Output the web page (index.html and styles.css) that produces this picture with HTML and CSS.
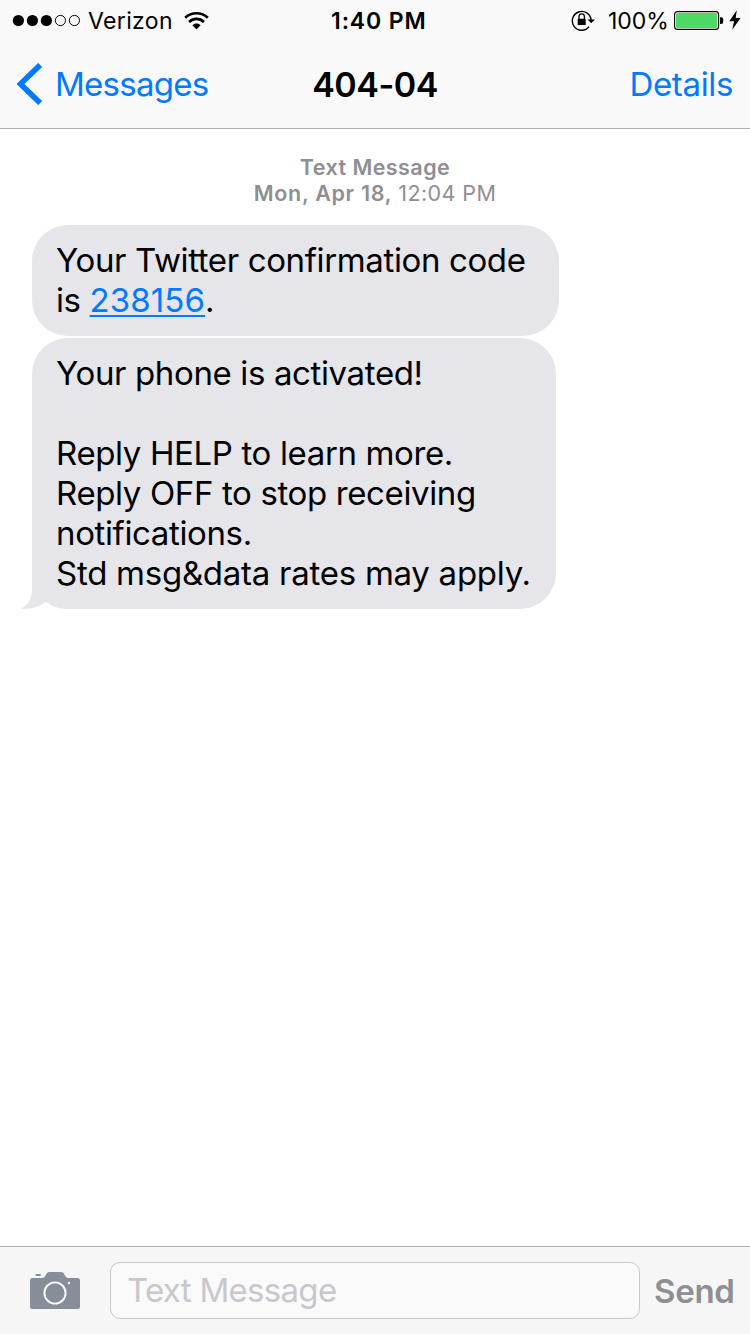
FILE: index.html
```html
<!DOCTYPE html>
<html lang="en">
<head>
<meta charset="utf-8">
<title>404-04</title>
<link rel="stylesheet" href="styles.css">
</head>
<body>
<div class="phone">
  <header class="top">
    <div class="status">
      <div class="status-left">
        <svg class="signal" width="69" height="13" viewBox="0 0 69 13"><g><circle cx="6.4" cy="6.5" r="5.6"/><circle cx="20.4" cy="6.5" r="5.6"/><circle cx="34.4" cy="6.5" r="5.6"/></g><g fill="none" stroke="#000" stroke-width="1"><circle cx="48.4" cy="6.5" r="5.1"/><circle cx="62.4" cy="6.5" r="5.1"/></g></svg>
        <span class="carrier">Verizon</span>
        <svg class="wifi" width="25" height="19" viewBox="0 0 25 19"><g fill="none" stroke="#000" stroke-width="2.7"><path d="M1.2 6.8C7.5.7 17.5.7 23.8 6.8"/><path d="M5 10.9C9.4 6.8 15.6 6.8 20 10.9"/></g><path d="M12.5 18.4L8.4 14.2C10.7 12 14.3 12 16.6 14.2Z"/></svg>
      </div>
      <span class="clock">1:40 PM</span>
      <div class="status-right">
        <svg class="lock" width="25" height="22" viewBox="0 0 25 22"><path d="M18 17.8A9.4 9.4 0 1 1 20.1 11" fill="none" stroke="#000" stroke-width="1.4"/><path d="M16.5 10.4H24L20.2 14.2Z"/><rect x="6.7" y="9.7" width="8" height="6.4" rx=".7"/><path d="M8 10V7.5a2.7 2.7 0 0 1 5.4 0V10" fill="none" stroke="#000" stroke-width="1.3"/></svg>
        <span class="percent">100%</span>
        <svg class="battery" width="50" height="19" viewBox="0 0 50 19"><rect x=".6" y=".6" width="44" height="17.8" rx="3" fill="#fff" stroke="#000" stroke-width="1.1"/><rect x="2" y="2" width="41.2" height="15" rx="1.6" fill="#4cd964"/><path d="M46 6.3h1.2a2 2 0 0 1 2 2v2.6a2 2 0 0 1-2 2H46Z"/></svg>
        <svg class="bolt" width="12" height="20" viewBox="0 0 12 20"><path d="M7.8.2L.3 11.2H5.1L3.2 19.8L11.6 7.9H6.7Z"/></svg>
      </div>
    </div>
    <nav class="nav">
      <a class="back"><svg class="chevron" width="26" height="42" viewBox="0 0 26 42"><path d="M23.2 1.9L3.4 21L23.2 40.1" fill="none" stroke="#007aff" stroke-width="5.6"/></svg><span class="back-label">Messages</span></a>
      <h1 class="title">404-04</h1>
      <a class="details">Details</a>
    </nav>
  </header>
  <main class="thread">
    <div class="stamp"><div class="kind">Text Message</div><div><b class="day">Mon, Apr 18,</b> <span class="hour">12:04 PM</span></div></div>
    <div class="bubble first">Your Twitter confirmation code<br>is <a class="code">238156</a>.</div>
    <div class="bubble second">Your phone is activated!<br><br>Reply HELP to learn more.<br>Reply OFF to stop receiving<br>notifications.<br><span class="rates">Std msg&amp;data rates may apply.</span>
      <svg class="tail" width="48" height="37" viewBox="0 0 48 37"><path d="M12 17H11V18C11 27 7 33.5 0 36.5V37H12Z" fill="#e5e5ea"/><path d="M0 37V36.7C9 37.5 18 35 25 30C31 34.5 38 37 48 37Z" fill="#fff"/></svg>
    </div>
  </main>
  <footer class="compose">
    <svg class="camera" width="50" height="38" viewBox="0 0 50 38"><path d="M2.5 6H12C14 6 14.8 4.8 15.8 3C16.8 1 17.5 0 19.5 0H31C33 0 33.7 1 34.7 3C35.7 4.8 36.5 6 38.5 6H47.5Q50 6 50 8.5V34.5Q50 37 47.5 37H2.5Q0 37 0 34.5V8.5Q0 6 2.5 6Z" fill="#868e99"/><rect x="5.5" y="2" width="5.3" height="2" rx=".7" fill="#868e99"/><circle cx="25" cy="21" r="10.6" fill="none" stroke="#fff" stroke-width="1.9"/><circle cx="39" cy="11" r="1.2" fill="#fff"/></svg>
    <div class="field"><span class="placeholder">Text Message</span></div>
    <span class="send">Send</span>
  </footer>
</div>
</body>
</html>
```
FILE: styles.css
```css
* { box-sizing: border-box; }
body { margin: 0; background: #fff; color: #000; font-family: Inter, "Liberation Sans", sans-serif; font-size: 33px; line-height: 40px; font-feature-settings: "calt" 0; }
svg { display: block; flex: none; }
.phone { width: 750px; height: 1334px; display: flex; flex-direction: column; white-space: nowrap; }
.top { height: 129px; background: #f9f9f9; border-bottom: 1px solid #b2b2b2; }
.status { height: 40px; padding: 1px 9px 0 12px; display: grid; grid-template-columns: 319px 1fr auto; align-items: center; font-size: 23px; line-height: 40px; }
.status svg { margin-bottom: 2px; }
.status-left, .status-right { display: flex; align-items: center; }
.carrier { margin-left: 7px; width: 96px; letter-spacing: .35px; }
.clock { font-weight: 560; letter-spacing: .9px; }
.percent { margin-left: 12px; width: 66px; }
.bolt { margin-left: 5px; }
.nav { height: 88px; padding: 0 17px; display: grid; grid-template-columns: 1fr auto 1fr; align-items: center; }
.back, .details { color: #007aff; }
.back { display: flex; align-items: center; }
.back-label { margin-left: 12px; letter-spacing: -.75px; }
.title { margin: 0; padding-top: 1px; font-size: 34px; font-weight: 600; letter-spacing: -.5px; }
.details { justify-self: end; letter-spacing: -.35px; }
.thread { flex: 1; padding: 25px 32px 0; }
.stamp { height: 71px; text-align: center; color: #8e8e93; font-size: 21.5px; line-height: 26px; }
.kind, .day { font-weight: 570; }
.kind { letter-spacing: .45px; }
.day { letter-spacing: .7px; }
.hour { letter-spacing: .4px; }
.bubble { position: relative; background: #e5e5ea; border-radius: 36px; padding: 15px 0 16px 24px; letter-spacing: -.37px; }
.first { width: 527px; height: 111px; margin-bottom: 2px; }
.second { width: 524px; height: 271px; border-bottom-left-radius: 0; }
.rates { letter-spacing: -.26px; }
.code { color: #007aff; letter-spacing: .1px; text-decoration: underline; text-decoration-thickness: 2px; text-underline-offset: 3px; }
.tail { position: absolute; left: -11px; bottom: 0; }
.compose { height: 88px; border-top: 1px solid #b2b2b2; background: #f6f6f6; padding: 0 15px 0 30px; display: flex; align-items: center; }
.camera { margin-top: 1px; }
.field { flex: none; margin-left: 30px; width: 530px; height: 57px; border: 1px solid #c8c8cd; border-radius: 10px; background: #fafafa; padding: 7px 16px; color: #c7c7cc; letter-spacing: -.7px; }
.send { margin-left: 14px; font-weight: 600; color: #8e8e93; letter-spacing: -.3px; }
```
